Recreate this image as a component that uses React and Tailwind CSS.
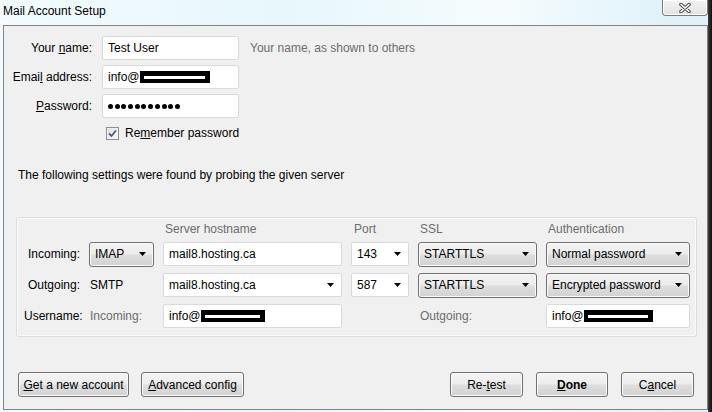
import React from 'react';

// Win7-style dialog: Thunderbird "Mail Account Setup"
const btnFace =
  'h-[25px] rounded-[3px] border border-[#707070] bg-[linear-gradient(#f4f4f4_0%,#ececec_48%,#dedede_52%,#d2d2d2_100%)] shadow-[inset_0_0_0_1px_#fbfbfb] flex items-center';

function Arrow() {
  return (
    <svg width="7" height="4" viewBox="0 0 7 4" className="shrink-0">
      <polygon points="0,0 7,0 3.5,4" fill="#000" />
    </svg>
  );
}

function Redact({ w }) {
  return (
    <span
      className="inline-block h-[12px] bg-white border-black border-l-[4px] border-r-[5px] border-t-[5px] border-b-[4px]"
      style={{ width: w }}
    />
  );
}

function TextBox({ children, arrow, className = '' }) {
  return (
    <div className={`h-[24px] bg-white border border-[#dadada] rounded-[2px] pl-[5px] pr-[7px] flex items-center ${className}`}>
      <div className="flex-1 flex items-center whitespace-nowrap">{children}</div>
      {arrow && <Arrow />}
    </div>
  );
}

function Select({ children }) {
  return (
    <div className={`${btnFace} pl-[5px] pr-[7px] justify-between`}>
      <span className="whitespace-nowrap">{children}</span>
      <Arrow />
    </div>
  );
}

function Button({ children, w, bold }) {
  return (
    <div className={`${btnFace} justify-center ${bold ? 'font-bold' : ''}`} style={{ width: w }}>
      {children}
    </div>
  );
}

export default function App() {
  return (
    <div className="w-[712px] h-[412px] relative overflow-hidden flex bg-[linear-gradient(to_right,#f3fbfe_0%,#e7f7fc_40%,#f6fcfe_70%,#dff2f9_95%)] font-['Liberation_Sans',Arial,sans-serif] text-[12px] text-black">
      <div className="w-[708px] flex flex-col">
        {/* title bar */}
        <div className="h-[25px] pl-[3px] pt-[3px] text-[12px] text-black leading-[16px]">Mail Account Setup</div>

        {/* dialog body */}
        <div className="ml-[3px] mb-[2px] flex-1 border border-[#838383] bg-[#f0f0f0] flex flex-col">
          <div className="pt-[10px] grid grid-cols-[88px_137px_auto] gap-x-[10px] gap-y-[5px] items-center">
            <span className="text-right">Your <u>n</u>ame:</span>
            <TextBox>Test User</TextBox>
            <span className="ml-[1px] text-[#6d6d6d]">Your name, as shown to others</span>

            <span className="text-right">Emai<u>l</u> address:</span>
            <TextBox>
              info@<Redact w={70} />
            </TextBox>
            <span />

            <span className="text-right"><u>P</u>assword:</span>
            <TextBox>
              <div className="flex gap-[1.7px]">
                {Array.from({ length: 11 }).map((_, i) => (
                  <span key={i} className="w-[5px] h-[5px] rounded-full bg-black" />
                ))}
              </div>
            </TextBox>
            <span />
          </div>

          <div className="mt-[6px] h-[18px] ml-[98px] pl-[4px] flex items-center gap-[6px]">
            <div className="w-[13px] h-[13px] border border-[#8f8f8f] bg-[linear-gradient(135deg,#dcdcdc,#fdfdfd)] shadow-[inset_0_0_0_1px_#f4f4f4] flex items-center justify-center">
              <svg width="9" height="9" viewBox="0 0 9 9">
                <path d="M1 4.5 L3.5 7 L8 1.5" stroke="#4a5c86" strokeWidth="1.8" fill="none" />
              </svg>
            </div>
            <span>Re<u>m</u>ember password</span>
          </div>

          <div className="mt-[25px] pl-[14px] h-[16px] leading-[16px]">
            The following settings were found by probing the given server
          </div>

          {/* server settings group */}
          <div className="mt-[34px] ml-[12px] w-[681px] border border-[#d5dfe5] rounded-[3px] shadow-[inset_0_0_0_1px_#fafafa] pl-[7px] pt-[5px] pb-[8px]">
            <div className="grid grid-cols-[56px_65px_179px_58px_119px_144px] grid-rows-[12px_24px_24px_24px] gap-x-[9px] gap-y-[7px] items-center">
              <span />
              <span />
              <span className="pl-[2px] text-[#6d6d6d] leading-[12px]">Server hostname</span>
              <span className="pl-[3px] text-[#6d6d6d] leading-[12px]">Port</span>
              <span className="pl-[2px] text-[#6d6d6d] leading-[12px]">SSL</span>
              <span className="pl-[2px] text-[#6d6d6d] leading-[12px]">Authentication</span>

              <span className="text-right">Incoming:</span>
              <Select>IMAP</Select>
              <TextBox>mail8.hosting.ca</TextBox>
              <TextBox arrow>143</TextBox>
              <Select>STARTTLS</Select>
              <Select>Normal password</Select>

              <span className="text-right">Outgoing:</span>
              <span className="pl-[1px]">SMTP</span>
              <TextBox arrow>mail8.hosting.ca</TextBox>
              <TextBox arrow>587</TextBox>
              <Select>STARTTLS</Select>
              <Select>Encrypted password</Select>

              <span className="text-right">Username:</span>
              <span className="pl-[1px] text-[#6d6d6d]">Incoming:</span>
              <TextBox>
                info@<Redact w={64} />
              </TextBox>
              <span />
              <span className="pl-[2px] text-[#6d6d6d]">Outgoing:</span>
              <TextBox>
                info@<Redact w={69} />
              </TextBox>
            </div>
          </div>

          <div className="mt-[35px] pl-[14px] pr-[13px] flex justify-between">
            <div className="flex gap-[12px]">
              <Button w={111}><span><u>G</u>et a new account</span></Button>
              <Button w={103}><span><u>A</u>dvanced config</span></Button>
            </div>
            <div className="flex gap-[13px]">
              <Button w={73}><span>Re-<u>t</u>est</span></Button>
              <Button w={72} bold><span><u>D</u>one</span></Button>
              <Button w={73}><span>C<u>a</u>ncel</span></Button>
            </div>
          </div>
        </div>
      </div>

      {/* dark window edge */}
      <div className="w-[4px] bg-[linear-gradient(to_right,#3b3b3b,#101010)]" />

      {/* close button */}
      <div className="absolute top-0 right-[4px] w-[46px] h-[16px] border border-t-0 border-[#7a7a7a] rounded-b-[4px] bg-[linear-gradient(#f4f4f4,#e2e2e2)] shadow-[inset_0_0_0_1px_#ffffff] flex items-center justify-center">
        <svg width="12" height="10" viewBox="0 0 12 10">
          <path d="M2 1.5 L10 8.5 M10 1.5 L2 8.5" stroke="#4b4b4b" strokeWidth="3.6" strokeLinecap="round" />
          <path d="M2 1.5 L10 8.5 M10 1.5 L2 8.5" stroke="#ffffff" strokeWidth="1.6" strokeLinecap="round" />
        </svg>
      </div>
    </div>
  );
}
